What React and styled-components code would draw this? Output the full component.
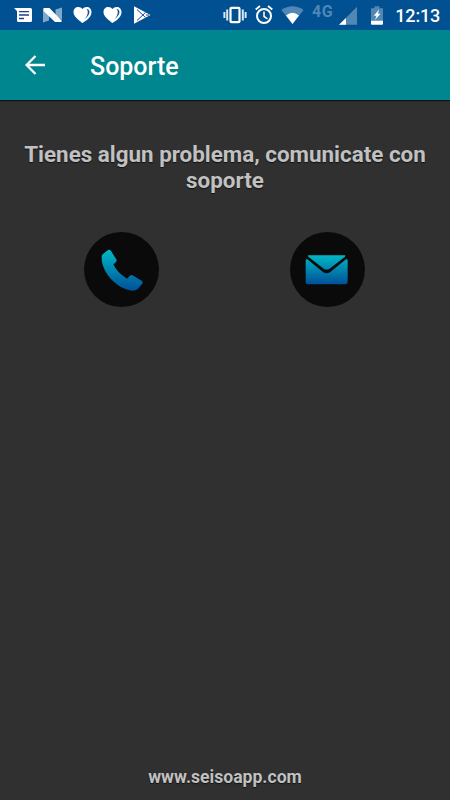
import React from 'react';
import styled, { createGlobalStyle } from 'styled-components';

const App = () => (
  <>
    <GlobalStyle />
    <Screen>
      <StatusBar>
        <IconGroup $start={14} $gap={11}>
          <MessageIcon />
          <NougatIcon />
          <HeartIcon />
          <HeartIcon />
          <PlayIcon />
        </IconGroup>
        <IconGroup $gap={8}>
          <VibrateIcon />
          <AlarmIcon />
          <WifiIcon />
          <Network>4G</Network>
          <SignalIcon />
          <BatteryIcon />
          <Clock>12:13</Clock>
        </IconGroup>
      </StatusBar>
      <Toolbar>
        <BackButton aria-label="Atrás">
          <svg width="20" height="20" viewBox="0 0 20 20" fill="none" stroke="#fff" strokeWidth="2.3">
            <path d="M20 10H2M10.5 1L1.6 10l8.9 9" />
          </svg>
        </BackButton>
        <Title>Soporte</Title>
      </Toolbar>
      <Content>
        <Message>Tienes algun problema, comunicate con soporte</Message>
        <Actions>
          <RoundButton aria-label="Llamar">
            <svg width="75" height="75" viewBox="28 29 225 225">
              <Gradient id="phone" from={82} to={205} />
              <path
                fill="url(#phone)"
                d="M81 106Q80 98 86 94L99 84Q105 80 109 86L125 111Q128 116 122 121L116 126Q127 151 157 169L165 161Q170 156 176 160L201 175Q206 179 203 184L190 199Q184 205 173 205C130 201 81 153 81 106Z"
              />
            </svg>
          </RoundButton>
          <RoundButton aria-label="Correo">
            <svg width="75" height="75" viewBox="32 29 225 225">
              <Gradient id="mail" from={98} to={186} />
              <path
                fill="url(#mail)"
                d="M87 99H197Q199 100 197 103L150 140Q142 145 134 140L87 103Q85 100 87 99ZM79 114Q79 109 84 111L131 149Q142 157 153 149L200 111Q205 109 205 114V179Q205 186 198 186H86Q79 186 79 179Z"
              />
            </svg>
          </RoundButton>
        </Actions>
      </Content>
      <Footer>www.seisoapp.com</Footer>
    </Screen>
  </>
);

const Gradient = ({ id, from, to }) => (
  <defs>
    <linearGradient id={id} gradientUnits="userSpaceOnUse" x1="0" y1={from} x2="0" y2={to}>
      <stop offset="0" stopColor="#00b8c6" />
      <stop offset="1" stopColor="#005099" />
    </linearGradient>
  </defs>
);

const MessageIcon = () => (
  <svg width="18" height="30" viewBox="0 0 18 30">
    <path fill="#fff" d="M0 8h16.5Q18 8 18 9.5v11Q18 22 16.5 22h-12Q3 22 3 20.5V11z" />
    <path stroke="#1c3f94" strokeWidth="1.3" d="M5 11.7h10M5 15h10M5 18.5h5" />
  </svg>
);

const NougatIcon = () => (
  <svg width="19" height="30" viewBox="0 0 19 30">
    <path fill="#7fa8ca" d="M0 9l6 5.500v6L0 22.500zM12.500 9.500L19 7.500V20l-6.500-4z" />
    <path fill="#fff" d="M.5 8H6.500L18.500 20.500V22H12L.5 11z" />
  </svg>
);

const HeartIcon = () => (
  <svg width="19" height="30" viewBox="0 0 19 30">
    <path
      fill="#fff"
      d="M9.500 23Q8.500 22.500 7.500 21.500C3 17.700.5 15.500.5 12C.5 9 2.600 7 5.300 7C7.100 7 8.600 7.900 9.500 9C10.400 7.900 11.900 7 13.700 7C16.400 7 18.500 9 18.500 12C18.500 16.500 14.500 20 9.500 23Z"
    />
    <path fill="#1c4a98" d="M13.500 8.800C17.400 9.500 18.200 14.500 11.300 19.500C15 15.500 15.800 11.500 13.500 8.800Z" />
  </svg>
);

const PlayIcon = () => (
  <svg width="18" height="30" viewBox="0 0 18 30">
    <path fill="#fff" d="M1 6.300L17.500 15L1 23.700Z" />
    <path fill="none" stroke="#1c3f94" strokeWidth="1" d="M4 9.500L12.500 17.500M4 20.500L12.500 12.500M13 15H16" />
  </svg>
);

const VibrateIcon = () => (
  <svg width="24" height="30" viewBox="0 0 24 30" fill="none" stroke="#fff">
    <rect x="7.500" y="7.800" width="9" height="14.400" rx="1" strokeWidth="2.200" />
    <path stroke="#dbe7f1" strokeWidth="2" d="M4.200 9.500v11M19.800 9.500v11M1.400 12v6M22.600 12v6" />
  </svg>
);

const AlarmIcon = () => (
  <svg width="18" height="30" viewBox="0 0 18 30" fill="none" stroke="#fff">
    <circle cx="9" cy="16" r="7" strokeWidth="2" />
    <path strokeWidth="1.800" d="M.7 9.500L5 6M17.300 9.500L13 6" />
    <path strokeWidth="1.500" d="M9 11.500V16.500L12.500 18.800" />
  </svg>
);

const WifiIcon = () => (
  <svg width="23" height="30" viewBox="0 0 23 30">
    <path fill="#5087b5" d="M.4 10Q11.500 2.500 22.600 10L11.500 24Z" />
    <path fill="#fff" d="M5 15.500Q11.500 10.200 18 15.500L11.500 24Z" />
  </svg>
);

const SignalIcon = () => (
  <svg width="19" height="30" viewBox="0 0 19 30">
    <path fill="#5087b5" d="M18 6.800V24.800H0Z" />
    <path fill="#fff" d="M7 18V24.800H0Z" />
  </svg>
);

const BatteryIcon = () => (
  <BatterySvg width="13" height="30" viewBox="0 0 13 30">
    <path fill="#5087b5" d="M0 8.200H3.500V6.300H8.500V8.200H12V21H0Z" />
    <path fill="#fff" d="M0 20.800h12v2.900q0 1-1 1H1q-1 0-1-1zM8 9.500L2.800 15.800H5.500L4 20L9.500 13.800H7Z" />
  </BatterySvg>
);

const BatterySvg = styled.svg`
  margin-left: 5px;
`;

const GlobalStyle = createGlobalStyle`
  body {
    margin: 0;
    background: #303030;
    font-family: Roboto, sans-serif;
  }

  svg {
    display: block;
    flex-shrink: 0;
  }
`;

const Screen = styled.div`
  width: 450px;
  height: 800px;
  display: flex;
  flex-direction: column;
  background: #303030;
  overflow: hidden;
`;

const StatusBar = styled.div`
  height: 30px;
  flex-shrink: 0;
  display: flex;
  justify-content: space-between;
  background: #005092;
  padding-right: 10px;
`;

const IconGroup = styled.div`
  display: flex;
  gap: ${({ $gap }) => $gap}px;
  padding-left: ${({ $start = 0 }) => $start}px;
`;

const Network = styled.span`
  width: 19px;
  color: #5087b5;
  font-size: 16px;
  font-weight: 700;
  letter-spacing: 0.6px;
  line-height: 23px;
`;

const Clock = styled.span`
  width: 45px;
  margin-left: 3px;
  color: #fff;
  font-size: 18px;
  font-weight: 500;
  letter-spacing: -0.2px;
  line-height: 32px;
  text-align: right;
`;

const Toolbar = styled.header`
  height: 70px;
  flex-shrink: 0;
  display: flex;
  align-items: center;
  background: #00868e;
  box-shadow: 0 1px 1px #111;
`;

const BackButton = styled.button`
  width: 70px;
  height: 70px;
  padding: 0 0 0 25px;
  border: 0;
  background: none;
`;

const Title = styled.h1`
  margin: 2px 0 0 20px;
  color: #fff;
  font-size: 25px;
  font-weight: 500;
`;

const Content = styled.main`
  flex: 1;
  padding: 41px 20px 0;
`;

const Message = styled.h2`
  margin: 0;
  color: #c1c1c1;
  font-size: 22.400px;
  font-weight: 700;
  line-height: 26px;
  text-align: center;
  text-shadow: 0 1px 1px #111;
`;

const Actions = styled.div`
  display: flex;
  justify-content: space-between;
  padding: 38.700px 64.600px 0 64.200px;
`;

const RoundButton = styled.button`
  width: 75px;
  height: 75px;
  padding: 0;
  border: 0;
  border-radius: 50%;
  background: #0a0a0a;
`;

const Footer = styled.footer`
  padding-bottom: 12px;
  color: #c1c1c1;
  font-size: 17.600px;
  font-weight: 700;
  line-height: 21px;
  text-align: center;
  text-shadow: 0 1px 1px #111;
`;

export default App;
